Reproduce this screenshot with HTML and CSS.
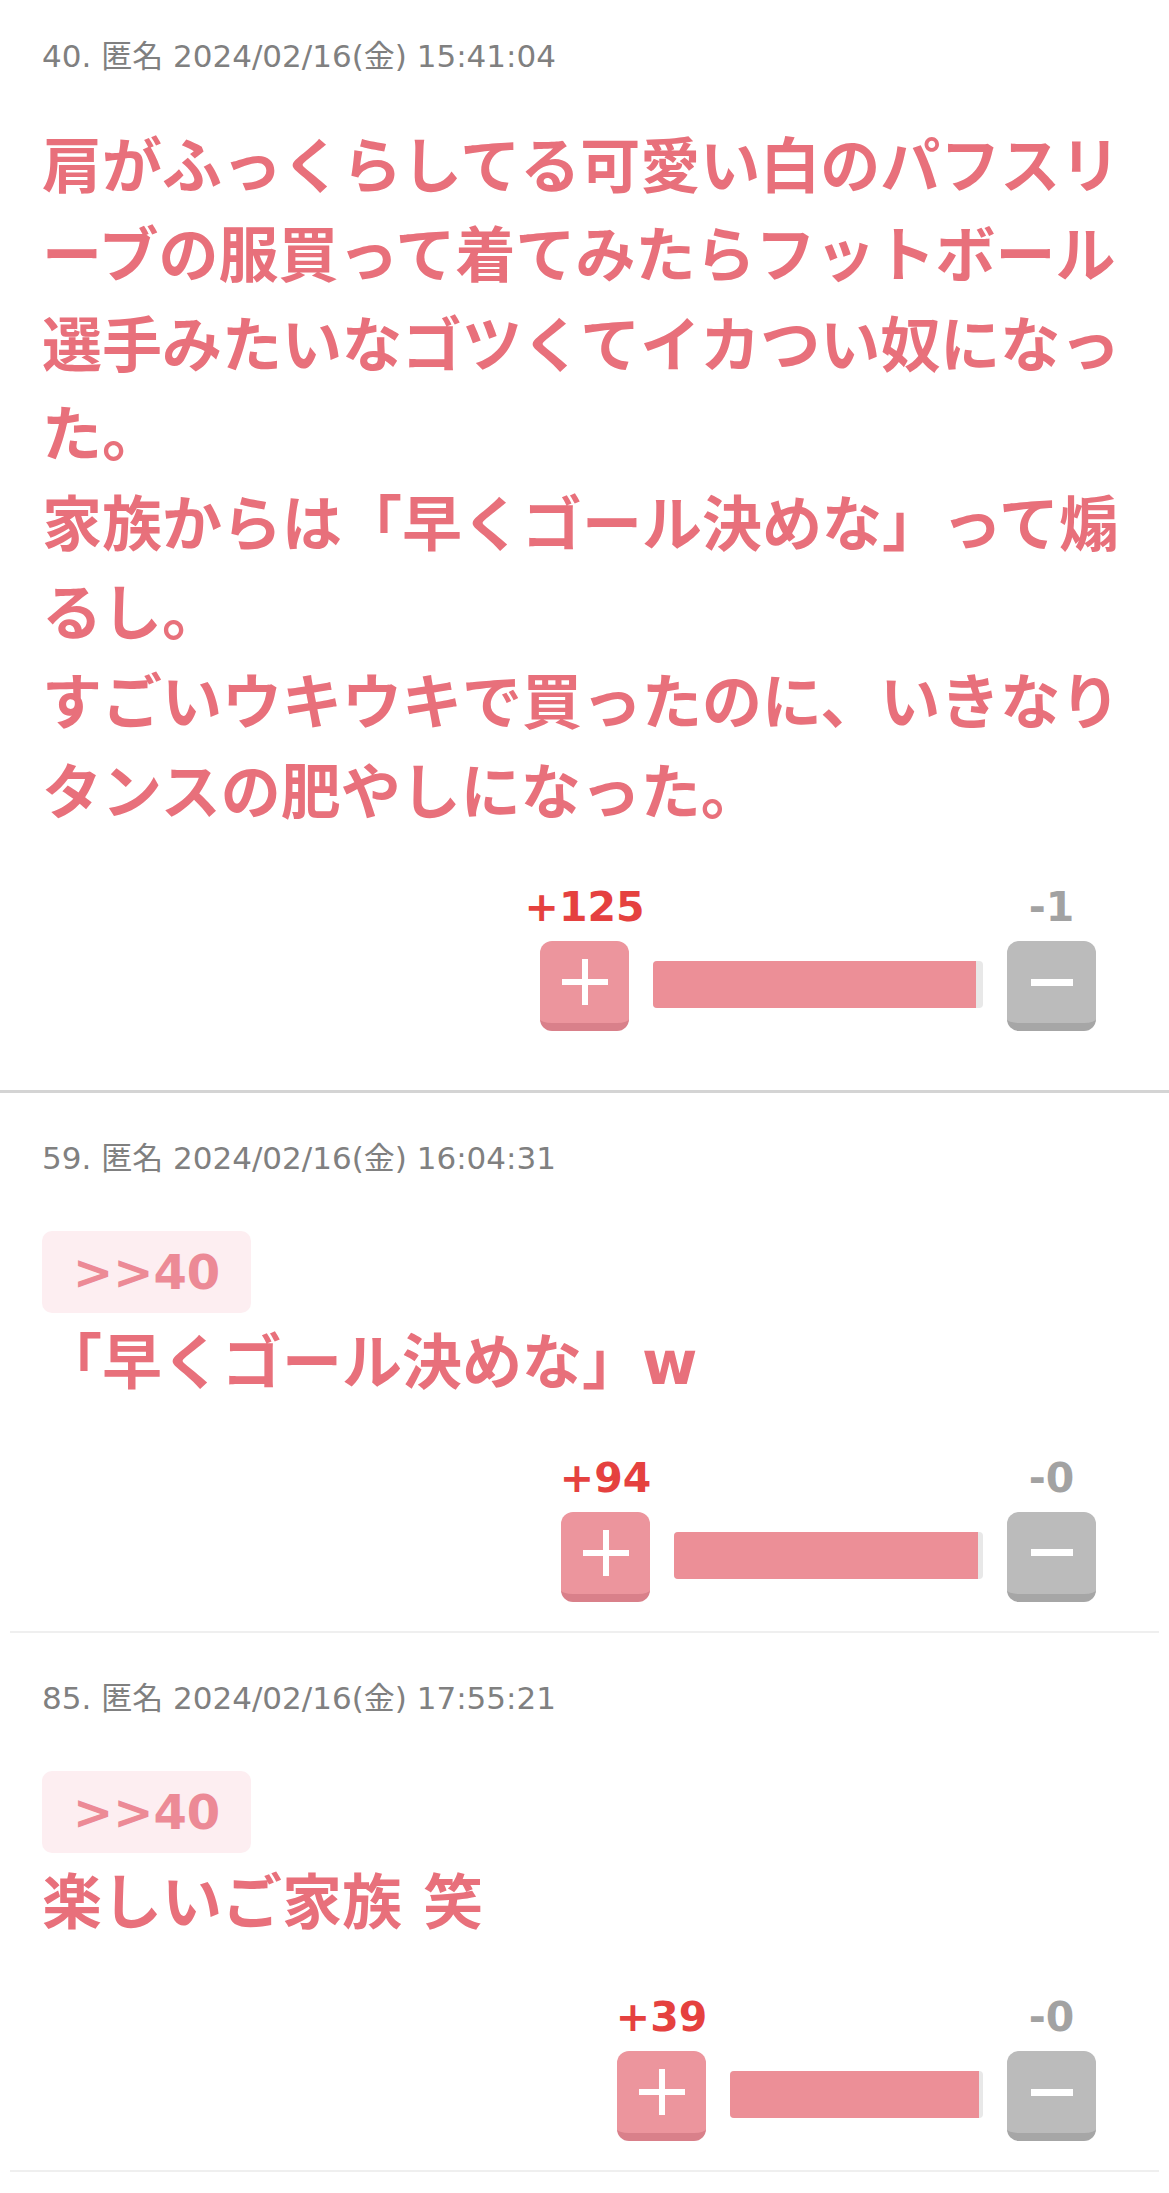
FILE: index.html
```html
<!DOCTYPE html>
<html lang="ja">
<head>
<meta charset="utf-8">
<title>コメント</title>
<link rel="stylesheet" href="styles.css">
</head>
<body>
<div class="thread">
  <article class="post post-main">
    <div class="meta">40. 匿名 2024/02/16(金) 15:41:04</div>
    <div class="body">肩がふっくらしてる可愛い白のパフスリーブの服買って着てみたらフットボール選手みたいなゴツくてイカつい奴になった。<br>家族からは「早くゴール決めな」って煽るし。<br>すごいウキウキで買ったのに、いきなりタンスの肥やしになった。</div>
    <div class="votes">
      <div class="vcol plus">
        <span class="count">+125</span>
        <button class="vbtn" type="button" aria-label="プラス"><span class="ico-plus"></span></button>
      </div>
      <div class="bar" style="width:330px"><div class="fill" style="width:98%"></div></div>
      <div class="vcol minus">
        <span class="count">-1</span>
        <button class="vbtn" type="button" aria-label="マイナス"><span class="ico-minus"></span></button>
      </div>
    </div>
  </article>

  <article class="post post-sub">
    <div class="meta">59. 匿名 2024/02/16(金) 16:04:31</div>
    <a class="anchor">&gt;&gt;40</a>
    <div class="body">「早くゴール決めな」w</div>
    <div class="votes">
      <div class="vcol plus">
        <span class="count">+94</span>
        <button class="vbtn" type="button" aria-label="プラス"><span class="ico-plus"></span></button>
      </div>
      <div class="bar" style="width:309px"><div class="fill" style="width:98.5%"></div></div>
      <div class="vcol minus">
        <span class="count">-0</span>
        <button class="vbtn" type="button" aria-label="マイナス"><span class="ico-minus"></span></button>
      </div>
    </div>
  </article>

  <article class="post post-sub">
    <div class="meta">85. 匿名 2024/02/16(金) 17:55:21</div>
    <a class="anchor">&gt;&gt;40</a>
    <div class="body">楽しいご家族 笑</div>
    <div class="votes">
      <div class="vcol plus">
        <span class="count">+39</span>
        <button class="vbtn" type="button" aria-label="プラス"><span class="ico-plus"></span></button>
      </div>
      <div class="bar" style="width:253px"><div class="fill" style="width:98.5%"></div></div>
      <div class="vcol minus">
        <span class="count">-0</span>
        <button class="vbtn" type="button" aria-label="マイナス"><span class="ico-minus"></span></button>
      </div>
    </div>
  </article>
</div>
</body>
</html>
```

FILE: styles.css
```css
html, body {
  margin: 0;
  padding: 0;
  background: #ffffff;
}

body {
  font-family: "DejaVu Sans", "Noto Sans CJK JP", sans-serif;
}

.thread {
  width: 1169px;
}

.post-main {
  padding: 36px 42px 59px;
  border-bottom: 3px solid #d4d4d4;
}

.post-sub {
  margin: 0 10px;
  padding: 45px 32px 29px;
  border-bottom: 2px solid #efefef;
}

.meta {
  font-size: 31px;
  line-height: 40px;
  color: #808080;
  white-space: nowrap;
}

.body {
  margin-top: 47px;
  font-family: "DejaVu Sans", "Noto Sans CJK JP", sans-serif;
  font-weight: 700;
  font-size: 60px;
  line-height: 89.4px;
  color: #e8707b;
  line-break: loose;
}

.anchor {
  display: block;
  width: fit-content;
  margin-top: 53px;
  padding: 0 31px;
  height: 82px;
  line-height: 82px;
  background: #fdeef1;
  border-radius: 10px;
  color: #ec8a96;
  font-weight: 700;
  font-size: 48px;
  text-decoration: none;
}

.post-sub .body {
  margin-top: 6px;
}

.votes {
  display: flex;
  justify-content: flex-end;
  align-items: flex-end;
  gap: 24px;
  margin: 47px 31px 0 0;
}

.vcol {
  width: 89px;
  display: flex;
  flex-direction: column;
  align-items: center;
  gap: 12px;
}

.count {
  font-family: "DejaVu Sans", sans-serif;
  font-weight: 700;
  font-size: 41px;
  line-height: 44px;
  white-space: nowrap;
}

.plus .count {
  color: #e5413f;
}

.minus .count {
  color: #a2a2a2;
}

.vbtn {
  width: 89px;
  height: 90px;
  box-sizing: border-box;
  padding: 0;
  border: 0;
  border-bottom: 8px solid #d9808a;
  border-radius: 12px;
  background: #ec959d;
  display: flex;
  align-items: center;
  justify-content: center;
}

.minus .vbtn {
  background: #bbbbbb;
  border-bottom-color: #a6a6a6;
}

.ico-plus {
  position: relative;
  width: 46px;
  height: 46px;
}

.ico-plus::before,
.ico-plus::after {
  content: "";
  position: absolute;
  background: #ffffff;
}

.ico-plus::before {
  left: 0;
  right: 0;
  top: 20px;
  height: 6px;
}

.ico-plus::after {
  top: 0;
  bottom: 0;
  left: 20px;
  width: 6px;
}

.ico-minus {
  width: 42px;
  height: 7px;
  background: #ffffff;
}

.bar {
  height: 47px;
  margin-bottom: 23px;
  background: #e8e8e8;
  border-radius: 4px;
  overflow: hidden;
}

.fill {
  height: 100%;
  background: #ec8f97;
}
```
